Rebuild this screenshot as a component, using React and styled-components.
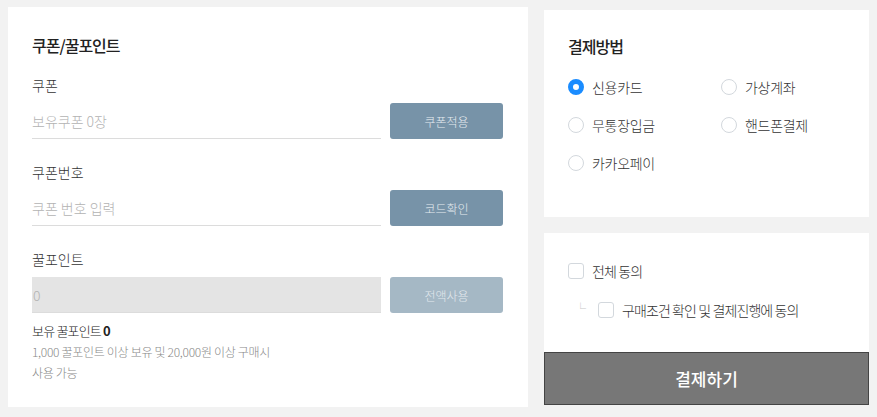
import React from 'react'
import styled, { createGlobalStyle } from 'styled-components'

const GlobalStyle = createGlobalStyle`
  * { box-sizing: border-box; }
  body {
    margin: 0;
    background: #f2f2f2;
    font-family: "Noto Sans CJK KR", "Noto Sans", sans-serif;
    font-weight: 300;
    color: #333;
  }
`

const methods = [
  ['신용카드', true],
  ['가상계좌', false],
  ['무통장입금', false],
  ['핸드폰결제', false],
  ['카카오페이', false],
]

function App() {
  return (
    <>
      <GlobalStyle />
      <Page>
        <LeftPanel>
          <Title>쿠폰/꿀포인트</Title>
          <Section>
            <Label>쿠폰</Label>
            <Row>
              <Field>보유쿠폰 0장</Field>
              <Button>쿠폰적용</Button>
            </Row>
          </Section>
          <Section>
            <Label>쿠폰번호</Label>
            <Row>
              <Field>쿠폰 번호 입력</Field>
              <Button>코드확인</Button>
            </Row>
          </Section>
          <Section>
            <Label>꿀포인트</Label>
            <Row>
              <Field $disabled>0</Field>
              <Button $disabled>전액사용</Button>
            </Row>
          </Section>
          <PointInfo>
            <Owned>보유 꿀포인트 <b>0</b></Owned>
            <Note>1,000 꿀포인트 이상 보유 및 20,000원 이상 구매시</Note>
            <Note>사용 가능</Note>
          </PointInfo>
        </LeftPanel>

        <RightColumn>
          <MethodPanel>
            <Title>결제방법</Title>
            <MethodGrid>
              {methods.map(([name, on]) => (
                <Option key={name}>
                  <Radio $checked={on} />
                  {name}
                </Option>
              ))}
            </MethodGrid>
          </MethodPanel>

          <AgreeBox>
            <AgreePanel>
              <Check>
                <Box />
                전체 동의
              </Check>
              <Check $sub>
                <Branch>└</Branch>
                <Box />
                구매조건 확인 및 결제진행에 동의
              </Check>
            </AgreePanel>
            <PayButton>결제하기</PayButton>
          </AgreeBox>
        </RightColumn>
      </Page>
    </>
  )
}

export default App

const Page = styled.div`
  display: flex;
  align-items: flex-start;
  gap: 16px;
  padding: 7px 8px 0 8px;
`

const LeftPanel = styled.div`
  width: 520px;
  height: 400px;
  background: #fff;
  padding: 26px 25px 0 24px;
`

const Title = styled.h2`
  margin: 0;
  font-size: 16px;
  line-height: 24px;
  font-weight: 500;
  color: #222;
  letter-spacing: -1px;
`

const Section = styled.div`
  margin-top: 18px;
  & + & { margin-top: 23px; }
`

const Label = styled.div`
  font-size: 14px;
  line-height: 20px;
  color: #333;
  margin-bottom: 8px;
`

const Row = styled.div`
  display: flex;
  gap: 9px;
`

const Field = styled.div`
  width: 349px;
  height: 36px;
  display: flex;
  align-items: center;
  padding-left: ${p => (p.$disabled ? '1px' : '0')};
  font-size: 14px;
  color: #b3b3b3;
  background: ${p => (p.$disabled ? '#e4e4e4' : '#fff')};
  border-bottom: 1px solid #dcdcdc;
`

const Button = styled.div`
  width: 113px;
  height: 36px;
  border-radius: 3px;
  display: flex;
  align-items: center;
  justify-content: center;
  font-size: 12px;
  color: ${p => (p.$disabled ? '#e3e9ee' : '#e6ecf0')};
  background: ${p => (p.$disabled ? '#a5b8c5' : '#7793a8')};
`

const PointInfo = styled.div`
  margin-top: 8px;
`

const Owned = styled.div`
  font-size: 13px;
  line-height: 20px;
  font-weight: 300;
  color: #222;
  letter-spacing: -0.8px;
  b { font-weight: 700; }
`

const Note = styled.div`
  font-size: 12px;
  line-height: 21px;
  color: #888;
  letter-spacing: -0.3px;
`

const RightColumn = styled.div`
  width: 325px;
  margin-top: 3px;
  display: flex;
  flex-direction: column;
  gap: 16px;
`

const MethodPanel = styled.div`
  height: 207px;
  background: #fff;
  padding: 24px 24px 0 24px;
`

const MethodGrid = styled.div`
  display: grid;
  grid-template-columns: 153px 1fr;
  grid-auto-rows: 38px;
  margin-top: 10px;
`

const Option = styled.div`
  display: flex;
  align-items: center;
  gap: 8px;
  font-size: 14px;
  color: #333;
  letter-spacing: -0.3px;
`

const Radio = styled.span`
  width: 16px;
  height: 16px;
  border-radius: 50%;
  flex-shrink: 0;
  background: #fff;
  border: ${p => (p.$checked ? '5px solid #1a8cff' : '1px solid #d3d8dd')};
`

const AgreeBox = styled.div`
  display: flex;
  flex-direction: column;
`

const AgreePanel = styled.div`
  height: 119px;
  background: #fff;
  padding: 30px 24px 0 24px;
  display: flex;
  flex-direction: column;
  gap: 23px;
`

const Check = styled.div`
  display: flex;
  align-items: center;
  gap: 8px;
  height: 16px;
  font-size: 14px;
  color: #333;
  letter-spacing: -0.9px;
  padding-left: ${p => (p.$sub ? '7px' : '0')};
`

const Branch = styled.span`
  font-size: 11px;
  color: #c8c8c8;
  width: 15px;
  margin-top: -4px;
`

const Box = styled.span`
  width: 16px;
  height: 16px;
  border: 1px solid #d3d8dd;
  border-radius: 3px;
  background: #fff;
  flex-shrink: 0;
`

const PayButton = styled.div`
  height: 53px;
  background: #777;
  border: 1px solid #444;
  display: flex;
  align-items: center;
  justify-content: center;
  font-size: 17px;
  font-weight: 500;
  color: #fff;
`
